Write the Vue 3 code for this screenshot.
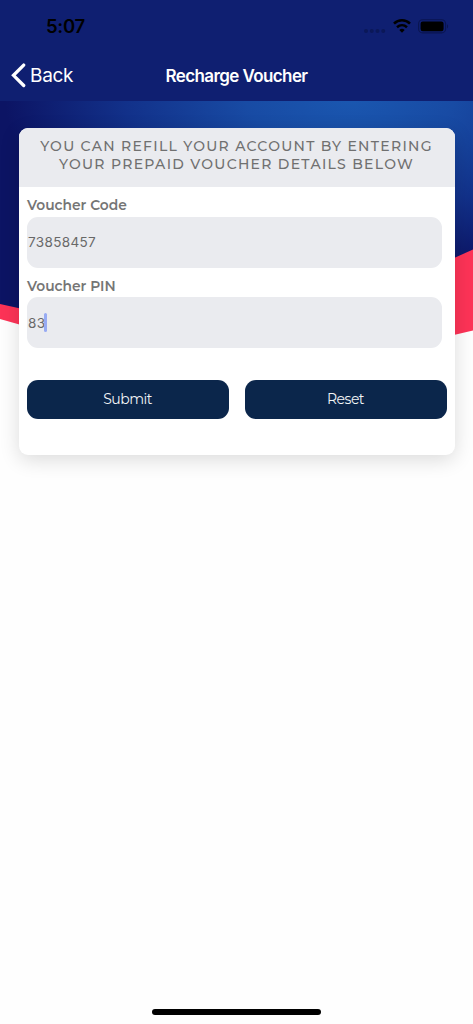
<template>
  <div class="screen">
    <header class="header">
      <div class="status-bar">
        <span class="time">5:07</span>
        <div class="status-icons">
          <svg class="signal" width="22" height="4" viewBox="0 0 22 4">
            <circle v-for="n in 4" :key="n" :cx="n * 5.75 - 3.75" cy="2" r="2" fill="#0b1858" />
          </svg>
          <svg class="wifi" width="18" height="14" viewBox="0 0 18 14">
            <path d="M1 4.6C5.5.2 12.5.2 17 4.6" fill="none" stroke="#000" stroke-width="2.6" />
            <path d="M4 8.2C7 5.5 11 5.5 14 8.2" fill="none" stroke="#000" stroke-width="2.5" />
            <path d="M6.3 11C8 9.3 10 9.3 11.7 11L9 13.7Z" fill="#000" />
          </svg>
          <svg class="battery" width="31" height="15" viewBox="0 0 31 15">
            <rect x="0.6" y="0.7" width="27" height="13.2" rx="4" fill="none" stroke="#0a1550" stroke-width="1.1" />
            <rect x="2.6" y="2.5" width="23" height="9.7" rx="2.2" fill="#000" />
            <path d="M29 5.2C30.5 5.8 30.5 8.8 29 9.4Z" fill="#0a1550" />
          </svg>
        </div>
      </div>
      <nav class="nav-bar">
        <button class="back" type="button">
          <svg width="15" height="25" viewBox="0 0 15 25">
            <path d="M12.7 2.1L2.5 12.3L12.7 22.5" fill="none" stroke="#fff" stroke-width="3.3" stroke-linecap="round" />
          </svg>
          <span>Back</span>
        </button>
        <h1 class="title">Recharge Voucher</h1>
        <span></span>
      </nav>
    </header>

    <main class="content">
      <svg class="backdrop" width="473" height="236" viewBox="0 101 473 236">
        <defs>
          <radialGradient id="glow" gradientUnits="userSpaceOnUse" cx="0" cy="0" r="1" gradientTransform="translate(350 98) scale(345 178)">
            <stop offset="0" stop-color="#1a57b0" />
            <stop offset="0.3" stop-color="#184ba4" />
            <stop offset="0.65" stop-color="#12318a" />
            <stop offset="1" stop-color="#0c1464" />
          </radialGradient>
        </defs>
        <path d="M0 101H473V330.5L236 386L0 319Z" fill="#fd3357" />
        <path d="M0 101H473V249.5L236 356L0 304Z" fill="url(#glow)" />
      </svg>

      <form class="card" @submit.prevent>
        <p class="intro">
          YOU CAN REFILL YOUR ACCOUNT BY ENTERING<br />
          YOUR PREPAID VOUCHER DETAILS BELOW
        </p>
        <div class="fields">
          <div v-for="field in fields" :key="field.label" class="field">
            <div class="label">{{ field.label }}</div>
            <div class="input">
              <span class="value">{{ field.value }}</span>
              <span v-if="field.focused" class="caret"></span>
            </div>
          </div>
        </div>
        <div class="buttons">
          <button type="submit">Submit</button>
          <button type="button" @click="reset">Reset</button>
        </div>
      </form>
    </main>

    <div class="home-indicator"></div>
  </div>
</template>

<script setup>
import { ref } from 'vue';

const fields = ref([
  { label: 'Voucher Code', value: '73858457', focused: false },
  { label: 'Voucher PIN', value: '83', focused: true },
]);

const reset = () => {
  fields.value.forEach((field) => {
    field.value = '';
  });
};
</script>

<style>
body {
  margin: 0;
  background: #fefefe;
}
</style>

<style scoped>
.screen {
  display: flex;
  flex-direction: column;
  height: 1024px;
  overflow: hidden;
  background: #fefefe;
  font-family: Montserrat, Inter, sans-serif;
}

.header {
  height: 101px;
  background: #0f1f71;
  font-family: Inter, sans-serif;
}

.status-bar {
  display: flex;
  align-items: center;
  justify-content: space-between;
  height: 52px;
  padding: 0 24px 0 46px;
}

.time {
  font-size: 18.5px;
  font-weight: 600;
  letter-spacing: -0.3px;
}

.status-icons {
  display: flex;
  align-items: center;
}

.signal {
  margin: 9px 7px 0 0;
}

.wifi {
  margin-right: 7px;
}

.nav-bar {
  display: grid;
  grid-template-columns: 1fr auto 1fr;
  align-items: center;
  height: 48px;
  padding: 0 11px;
  color: #fff;
}

.back {
  display: flex;
  align-items: center;
  gap: 4px;
  margin-top: -1px;
  padding: 0;
  border: none;
  background: none;
  color: #fff;
  font-family: Inter, sans-serif;
  font-size: 19px;
  letter-spacing: -0.3px;
}

.title {
  margin: 0;
  font-size: 17px;
  font-weight: 600;
  letter-spacing: -0.6px;
}

.content {
  position: relative;
  flex: 1;
  padding: 27px 18.5px 0;
}

/* sits behind the card */
.backdrop {
  position: absolute;
  top: 0;
  left: 0;
}

.card {
  position: relative;
  height: 327px;
  border-radius: 9px;
  overflow: hidden;
  background: #fff;
  box-shadow: 0 5px 20px rgba(0, 0, 0, 0.14);
}

.intro {
  box-sizing: border-box;
  height: 59px;
  margin: 0;
  padding-top: 9px;
  background: #eaebef;
  color: #707070;
  font-size: 14px;
  font-weight: 500;
  line-height: 18.3px;
  letter-spacing: 1.3px;
  text-align: center;
  white-space: nowrap;
}

.fields {
  padding: 0 13px 0 8.5px;
}

.label {
  height: 29.5px;
  line-height: 36px;
  color: #757575;
  font-size: 13.8px;
  font-weight: 600;
}

.input {
  display: flex;
  align-items: center;
  height: 51px;
  padding-left: 1px;
  border-radius: 11px;
  background: #eaebef;
  color: #686868;
  font-family: Inter, sans-serif;
  font-size: 13.5px;
  letter-spacing: 0.35px;
}

.caret {
  width: 3px;
  height: 18.5px;
  margin-left: -1px;
  border-radius: 1.5px;
  background: #98abf3;
}

.buttons {
  display: flex;
  gap: 16px;
  padding: 32px 8px 0;
}

.buttons button {
  flex: 1;
  height: 38.5px;
  padding: 0;
  border: none;
  border-radius: 11px;
  background: #0b264b;
  color: #f2f4f6;
  font-family: Montserrat, Inter, sans-serif;
  font-size: 14px;
  letter-spacing: -0.5px;
}

.home-indicator {
  width: 169px;
  height: 6px;
  margin: 0 auto 9px;
  border-radius: 3px;
  background: #000;
}
</style>
